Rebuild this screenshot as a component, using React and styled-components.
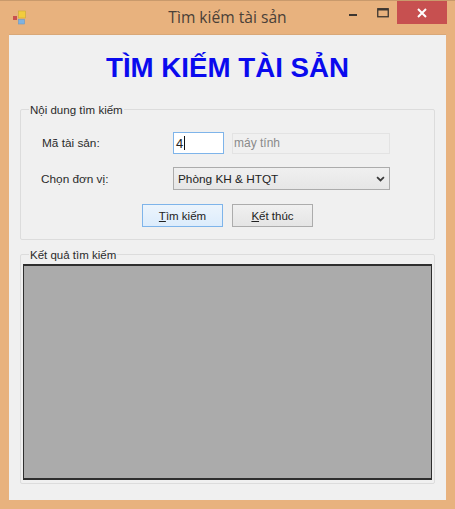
import styled, { createGlobalStyle } from 'styled-components'

const GlobalStyle = createGlobalStyle`
  * {
    box-sizing: border-box;
  }
  html,
  body {
    margin: 0;
    padding: 0;
    background: #e8b27e;
  }
`

export default function App() {
  return (
    <Window>
      <GlobalStyle />
      <TitleBar>
        <AppIcon viewBox="0 0 16 16">
          <rect x="1" y="6" width="4" height="4" fill="#c9504f" />
          <rect x="6.5" y="1" width="7" height="7" fill="#f2cc3d" stroke="#c9a93a" strokeWidth="0.6" />
          <rect x="6.5" y="9.5" width="6" height="4.5" fill="#7fb2e0" stroke="#6a98c4" strokeWidth="0.6" />
        </AppIcon>
        <WindowTitle>Tìm kiếm tài sản</WindowTitle>
        <WindowControls>
          <MinButton>
            <svg width="10" height="10" viewBox="0 0 10 10">
              <rect x="1" y="6" width="8" height="2" fill="#3d3630" />
            </svg>
          </MinButton>
          <MaxButton>
            <svg width="12" height="10" viewBox="0 0 12 10">
              <rect x="0.75" y="0.75" width="10.5" height="8" fill="none" stroke="#3d3630" strokeWidth="1.3" />
              <rect x="1" y="0.5" width="10" height="2" fill="#3d3630" />
            </svg>
          </MaxButton>
          <CloseButton>
            <svg width="10" height="10" viewBox="0 0 10 10">
              <path d="M1 1 L9 9 M9 1 L1 9" stroke="#fff" strokeWidth="2" />
            </svg>
          </CloseButton>
        </WindowControls>
      </TitleBar>
      <Content>
        <Heading>TÌM KIẾM TÀI SẢN</Heading>
        <SearchGroup>
          <GroupLegend>Nội dung tìm kiếm</GroupLegend>
          <SearchBody>
            <FormRow>
              <FieldLabel>Mã tài sản:</FieldLabel>
              <CodeInput>
                4<Caret />
              </CodeInput>
              <NameInput>máy tính</NameInput>
            </FormRow>
            <SelectRow>
              <FieldLabel $nudge>Chọn đơn vị:</FieldLabel>
              <UnitSelect>
                <span>Phòng KH &amp; HTQT</span>
                <svg width="9" height="6" viewBox="0 0 10 7">
                  <path d="M1 1.2 L5 5.2 L9 1.2" fill="none" stroke="#3a3a3a" strokeWidth="2" />
                </svg>
              </UnitSelect>
            </SelectRow>
            <ButtonRow>
              <ActionButton $focused type="button">
                <u>T</u>ìm kiếm
              </ActionButton>
              <ActionButton type="button">
                <u>K</u>ết thúc
              </ActionButton>
            </ButtonRow>
          </SearchBody>
        </SearchGroup>
        <ResultGroup>
          <GroupLegend>Kết quả tìm kiếm</GroupLegend>
          <ResultGrid />
        </ResultGroup>
      </Content>
    </Window>
  )
}

const Window = styled.div`
  width: 455px;
  height: 509px;
  display: flex;
  flex-direction: column;
  padding: 0 9px 9px 9px;
  background: #e8b27e;
  border-top: 1px solid #c99a6c;
  font-family: 'Liberation Sans', Arial, sans-serif;
  font-size: 12px;
  color: #2b2b2b;
`

const TitleBar = styled.div`
  height: 33px;
  flex: none;
  display: flex;
  align-items: center;
  position: relative;
`

const AppIcon = styled.svg`
  width: 16px;
  height: 16px;
  margin: 0 0 0 3px;
`

const WindowTitle = styled.div`
  position: absolute;
  left: 0;
  right: 0;
  top: 7px;
  text-align: center;
  font-family: 'Open Sans', 'Noto Sans', sans-serif;
  font-size: 15.6px;
  line-height: 19px;
  color: #4a4038;
`

const WindowControls = styled.div`
  margin-left: auto;
  margin-right: -1px;
  height: 23px;
  align-self: flex-start;
  display: flex;
  align-items: center;
`

const MinButton = styled.div`
  width: 26px;
  height: 23px;
  display: flex;
  align-items: center;
  justify-content: center;
  margin-right: 4px;
`

const MaxButton = styled.div`
  width: 26px;
  height: 23px;
  display: flex;
  align-items: center;
  justify-content: center;
  margin-right: 1px;
`

const CloseButton = styled.div`
  width: 50px;
  height: 23px;
  display: flex;
  align-items: center;
  justify-content: center;
  background: #c75050;
`

const Content = styled.div`
  flex: 1;
  background: #f0f0f0;
  border-top: 1px solid #d9a878;
  padding: 0 11px;
  display: flex;
  flex-direction: column;
`

const Heading = styled.h1`
  margin: 0;
  height: 74px;
  padding-top: 15px;
  text-align: center;
  font-family: 'Liberation Sans', Arial, sans-serif;
  font-size: 27.7px;
  line-height: 35px;
  font-weight: 700;
  color: #0a0aee;
`

const Group = styled.fieldset`
  margin: 0;
  padding: 0;
  min-width: 0;
  border: 1px solid #dcdcdc;
  border-radius: 2px;
`

const SearchGroup = styled(Group)`
  height: 139px;
  margin-top: -8px;
`

const SearchBody = styled.div`
  padding: 15px 22px 0 21px;
`

const ResultGroup = styled(Group)`
  height: 238px;
  margin-top: 6px;
`

const GroupLegend = styled.legend`
  margin-left: 8px;
  padding: 2px 1px 0;
  font-size: 11.5px;
  line-height: 14px;
  color: #2b2b2b;
`

const FormRow = styled.div`
  height: 22px;
  display: flex;
  align-items: center;
`

const SelectRow = styled(FormRow)`
  height: 23px;
  margin-top: 13px;
`

const FieldLabel = styled.div`
  width: 131px;
  flex: none;
  font-size: 11.8px;
  text-indent: ${(p) => (p.$nudge ? '-1px' : '0')};
`

const CodeInput = styled.div`
  width: 51px;
  height: 22px;
  display: flex;
  align-items: center;
  padding-left: 2px;
  background: #fff;
  border: 1px solid #7eb4ea;
  font-size: 13px;
  color: #222;
`

const Caret = styled.span`
  width: 1px;
  height: 14px;
  margin-left: 1px;
  background: #111;
`

const NameInput = styled.div`
  width: 158px;
  height: 21px;
  margin-left: 8px;
  display: flex;
  align-items: center;
  padding-left: 1px;
  background: #f0f0f0;
  border: 1px solid #e3e3e3;
  font-size: 12px;
  color: #8a8a8a;
`

const UnitSelect = styled.div`
  width: 217px;
  height: 23px;
  display: flex;
  align-items: center;
  justify-content: space-between;
  padding: 0 4px 0 4px;
  background: linear-gradient(#f0f0f0, #e6e6e6);
  border: 1px solid #acacac;
  font-size: 11.8px;
  color: #222;
`

const ButtonRow = styled.div`
  display: flex;
  gap: 9px;
  margin-top: 14px;
  margin-left: 100px;
`

const ActionButton = styled.button`
  width: 81px;
  height: 23px;
  padding: 0;
  font-family: inherit;
  font-size: 11.5px;
  color: #222;
  border-radius: 0;
  border: 1px solid ${(p) => (p.$focused ? '#7eb4ea' : '#acacac')};
  background: ${(p) =>
    p.$focused ? 'linear-gradient(#ecf4fc, #dcecfc)' : 'linear-gradient(#f0f0f0, #e5e5e5)'};
`

const ResultGrid = styled.div`
  height: 216px;
  margin: 2px 2px 0 2px;
  background: #ababab;
  border: 1px solid #2e2e2e;
  border-width: 2px 1px 2px 1px;
`
